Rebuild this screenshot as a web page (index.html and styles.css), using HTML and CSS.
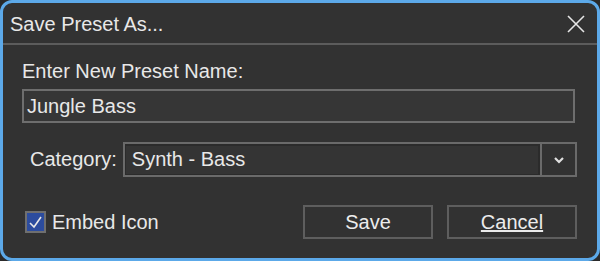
FILE: index.html
```html
<!DOCTYPE html>
<html lang="en">
<head>
  <meta charset="UTF-8" />
  <title>Save Preset As...</title>
  <link rel="stylesheet" href="styles.css">
</head>
<body>
  <div class="dialog">
    <div class="titlebar">
      <span class="title">Save Preset As...</span>
      <svg class="close" width="20" height="20" viewBox="0 0 20 20">
        <path d="M2 2 L18 18 M18 2 L2 18" stroke="#e6e6e6" stroke-width="1.6" fill="none" />
      </svg>
    </div>

    <div class="content">
      <div class="field-label">Enter New Preset Name:</div>
      <div class="text-input">Jungle Bass</div>

      <div class="category-row">
        <span class="category-label">Category:</span>
        <div class="select">
          <div class="select-value">Synth - Bass</div>
          <div class="select-button">
            <svg width="12" height="10" viewBox="0 0 12 10">
              <path d="M2 3 L6 7 L10 3" stroke="#e0e0e0" stroke-width="2.2" fill="none" />
            </svg>
          </div>
        </div>
      </div>

      <div class="bottom-row">
        <label class="checkbox">
          <span class="check-box">
            <svg width="17" height="17" viewBox="0 0 17 17">
              <path d="M3 9 L7 13 L14 3" stroke="#e8e8e8" stroke-width="1.6" fill="none" />
            </svg>
          </span>
          <span>Embed Icon</span>
        </label>
        <div class="buttons">
          <button class="btn">Save</button>
          <button class="btn"><u>Cancel</u></button>
        </div>
      </div>
    </div>
  </div>
</body>
</html>
```

FILE: styles.css
```css
html, body {
  margin: 0;
  height: 100%;
}

body {
  background-color: #2a2a2a;
  font-family: "Liberation Sans", Arial, sans-serif;
  color: #e8e8e8;
}

.dialog {
  box-sizing: border-box;
  width: 600px;
  height: 261px;
  background-color: #323232;
  border: 3px solid #5ca9e9;
  border-radius: 12px;
  overflow: hidden;
}

.titlebar {
  height: 40px;
  border-bottom: 2px solid #5c5c5c;
  display: flex;
  align-items: center;
  justify-content: space-between;
  padding: 0 11px 0 7px;
}

.title {
  font-size: 20px;
  padding-top: 2px;
}

.close {
  margin-top: 1px;
}

.content {
  padding: 15px 20px 0 19px;
}

.field-label {
  font-size: 20px;
  line-height: 23px;
}

.text-input {
  box-sizing: border-box;
  margin-top: 6px;
  height: 34px;
  width: 553px;
  border: 2px solid #6e6e6e;
  background-color: #363636;
  font-size: 20px;
  line-height: 30px;
  padding-left: 3px;
}

.category-row {
  display: flex;
  align-items: center;
  margin-top: 19px;
}

.category-label {
  font-size: 20px;
  margin-left: 8px;
  width: 93px;
}

.select {
  box-sizing: border-box;
  display: flex;
  width: 455px;
  height: 35px;
  border: 2px solid #6a6a6a;
}

.select-value {
  flex: 1;
  border: 2px solid #2b2b2b;
  border-left-width: 1px;
  border-bottom-width: 1px;
  background-color: #343434;
  font-size: 20px;
  line-height: 27px;
  padding-left: 6px;
}

.select-button {
  width: 33px;
  border-left: 2px solid #6a6a6a;
  display: flex;
  align-items: center;
  justify-content: center;
}

.bottom-row {
  display: flex;
  align-items: center;
  justify-content: space-between;
  margin-top: 28px;
}

.checkbox {
  display: flex;
  align-items: center;
  gap: 6px;
  font-size: 20px;
  margin-left: 3px;
}

.check-box {
  box-sizing: border-box;
  width: 21px;
  height: 22px;
  border: 2px solid #6f6f6f;
  background-color: #2c4c9e;
  display: flex;
  align-items: center;
  justify-content: center;
}

.buttons {
  display: flex;
  gap: 14px;
}

.btn {
  box-sizing: border-box;
  width: 130px;
  height: 34px;
  background-color: #323232;
  border: 2px solid #5e5e5e;
  color: #ececec;
  font-family: "Liberation Sans", Arial, sans-serif;
  font-size: 20px;
  padding: 0;
}
```
